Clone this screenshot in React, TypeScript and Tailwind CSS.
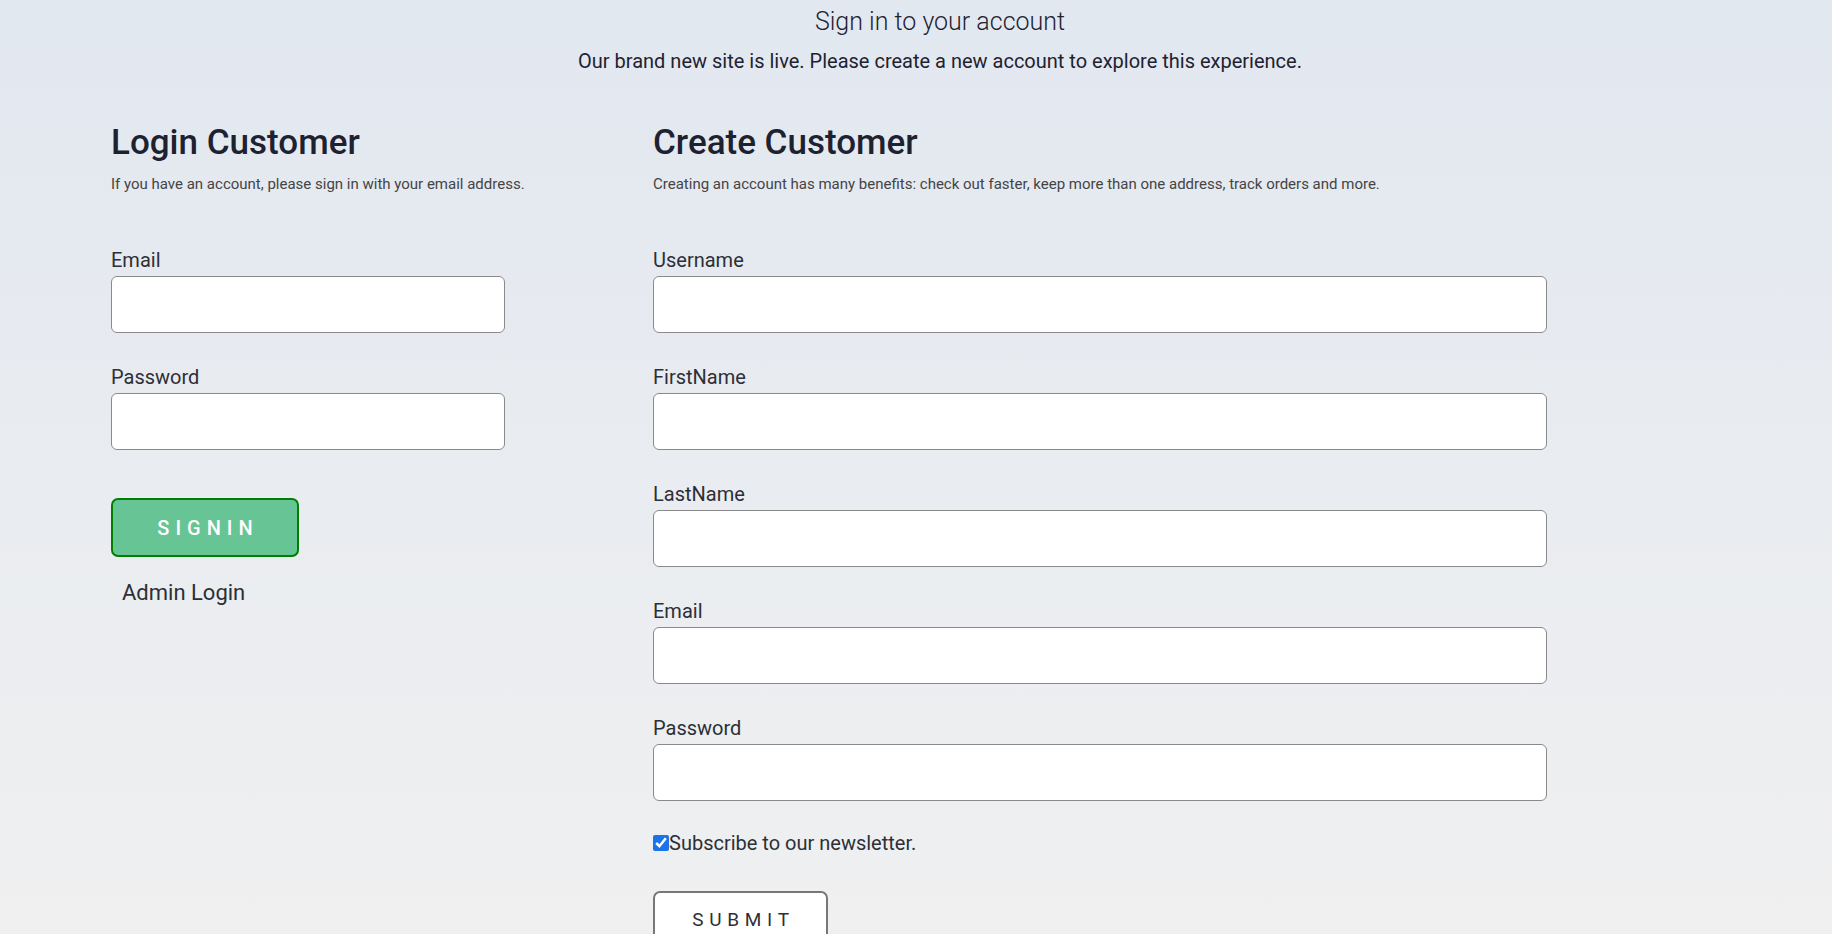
const Field = ({ label, type = "text" }: { label: string; type?: string }) => (
  <div className="flex flex-col">
    <label className="text-[20px] leading-[24px] text-[#2d2f36]">{label}</label>
    <input
      type={type}
      className="mt-[4px] h-[57px] w-full rounded-[6px] border border-[#8a8a8a] bg-white px-3 outline-none"
    />
  </div>
)

export default function App() {
  return (
    <div className="min-h-[934px] bg-gradient-to-b from-[#e2e8f0] to-[#f0f0f0] font-['Roboto',sans-serif] text-[#1f2230]">
      <div className="pl-[48px] pt-[6px] text-center">
        <h2 className="text-[25px] leading-[32px] font-light text-[#1f2230]">Sign in to your account</h2>
        <p className="mt-[9px] text-[20px] leading-[28px] text-[#1f2230]">
          Our brand new site is live. Please create a new account to explore this experience.
        </p>
      </div>

      <div className="mt-[46px] flex pl-[111px]">
        <div className="w-[542px]">
          <h1 className="text-[35px] leading-[44px] font-medium text-[#1e2230]">Login Customer</h1>
          <p className="mt-[9px] text-[15px] leading-[20px] text-[#444]">
            If you have an account, please sign in with your email address.
          </p>
          <div className="mt-[54px] flex w-[394px] flex-col gap-[32px]">
            <Field label="Email" type="email" />
            <Field label="Password" type="password" />
          </div>
          <button className="mt-[48px] h-[59px] w-[188px] rounded-[7px] border-2 border-[#008000] bg-[#66c495] pl-[6px] text-[20px] font-medium tracking-[0.3em] text-white">
            SIGNIN
          </button>
          <div className="mt-[22px] pl-[11px] text-[22px] leading-[28px] text-[#2d2f36]">Admin Login</div>
        </div>

        <div className="w-[894px]">
          <h1 className="text-[35px] leading-[44px] font-medium text-[#1e2230]">Create Customer</h1>
          <p className="mt-[9px] text-[15px] leading-[20px] text-[#444]">
            Creating an account has many benefits: check out faster, keep more than one address, track orders and more.
          </p>
          <div className="mt-[54px] flex flex-col gap-[32px]">
            <Field label="Username" />
            <Field label="FirstName" />
            <Field label="LastName" />
            <Field label="Email" type="email" />
            <Field label="Password" type="password" />
          </div>
          <label className="mt-[30px] flex items-center text-[20px] leading-[24px] text-[#2d2f36]">
            <input type="checkbox" defaultChecked className="m-0 h-[16px] w-[16px] accent-[#1a73e8]" />
            Subscribe to our newsletter.
          </label>
          <button className="mt-[36px] h-[59px] w-[175px] rounded-[7px] border-2 border-[#777] bg-white pl-[6px] text-[19px] tracking-[0.3em] text-[#2d2f36]">
            SUBMIT
          </button>
        </div>
      </div>
    </div>
  )
}
